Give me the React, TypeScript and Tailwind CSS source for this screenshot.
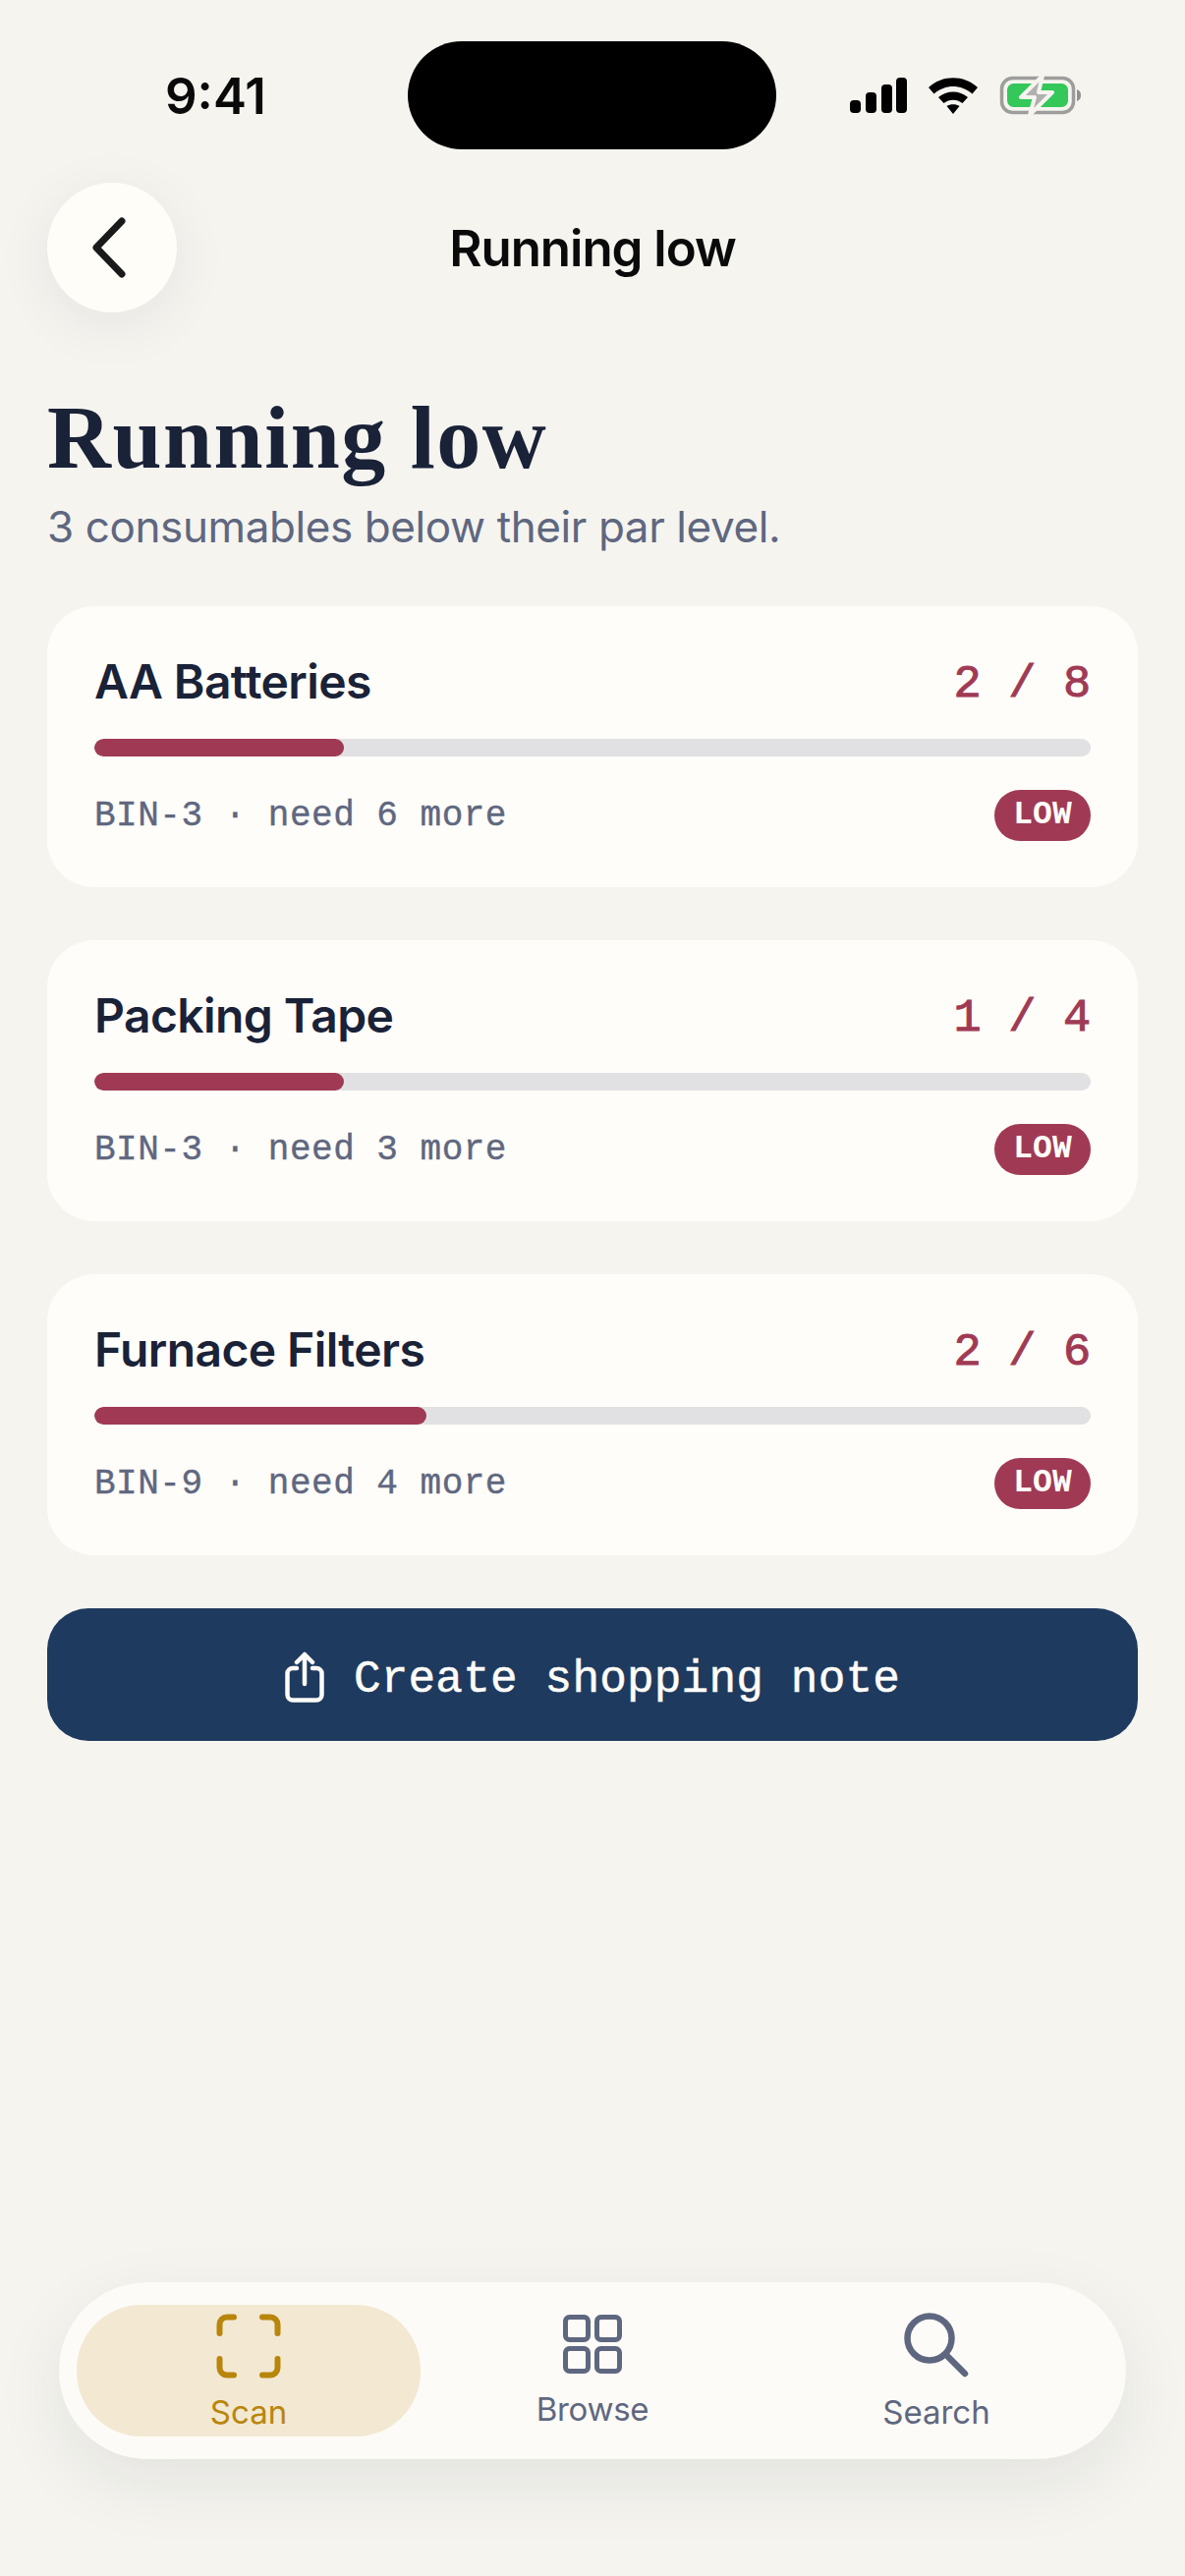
import React from "react";

const items = [
  { name: "AA Batteries", count: "2 / 8", meta: "BIN-3 · need 6 more", pct: 25 },
  { name: "Packing Tape", count: "1 / 4", meta: "BIN-3 · need 3 more", pct: 25 },
  { name: "Furnace Filters", count: "2 / 6", meta: "BIN-9 · need 4 more", pct: 33.33 },
];

const inter = "font-['Inter','Liberation_Sans',sans-serif]";
const mono = "font-['Liberation_Mono','DejaVu_Sans_Mono',monospace]";

function StatusIcons() {
  return (
    <svg width="240" height="42" viewBox="0 0 240 42" className="block">
      <rect x="5" y="26" width="11" height="13" rx="4" fill="#000" />
      <rect x="21" y="18" width="11" height="21" rx="4" fill="#000" />
      <rect x="37" y="10" width="11" height="29" rx="4" fill="#000" />
      <rect x="52" y="3" width="11" height="36" rx="4" fill="#000" />
      <path d="M85 13 C99 0 121 0 135 13 L129.500 19.500 C118 9.500 102 9.500 90.500 19.500 Z" fill="#000" />
      <path d="M95 23 C103 15.500 117 15.500 125 23 L119.500 29 C114 24.500 106 24.500 100.500 29 Z" fill="#000" />
      <path d="M103.500 32 C107 29.500 113 29.500 116.500 32 L110 40 Z" fill="#000" />
      <rect x="159.500" y="3.500" width="73" height="35" rx="11" fill="none" stroke="#9d9d9b" strokeWidth="3.500" />
      <rect x="165" y="9" width="62" height="24" rx="6.500" fill="#34c759" />
      <path d="M236 15 C239 16 240 18 240 21 C240 24 239 26 236 27 Z" fill="#8f8f8d" />
      <path d="M201 1 L179 23 H193 L188 41 L211 18 H197 Z" fill="#b0b0ae" stroke="#f5f4ef" strokeWidth="4" strokeLinejoin="round" />
    </svg>
  );
}

function ScanIcon() {
  return (
    <svg width="66" height="66" viewBox="0 0 66 66" fill="none" stroke="#b8860b" strokeWidth="6" strokeLinecap="round" className="block">
      <path d="M3.500 20 V11 A7.500 7.500 0 0 1 11 3.500 H18" />
      <path d="M47 3.500 H55 A7.500 7.500 0 0 1 62.500 11 V20" />
      <path d="M3.500 46 V55 A7.500 7.500 0 0 0 11 62.500 H18" />
      <path d="M47 62.500 H55 A7.500 7.500 0 0 0 62.500 55 V46" />
    </svg>
  );
}

function GridIcon() {
  return (
    <svg width="60" height="60" viewBox="0 0 60 60" fill="none" stroke="#5f6780" strokeWidth="5" className="block">
      <rect x="2.500" y="2.500" width="23" height="23" rx="4" />
      <rect x="34.500" y="2.500" width="23" height="23" rx="4" />
      <rect x="2.500" y="34.500" width="23" height="23" rx="4" />
      <rect x="34.500" y="34.500" width="23" height="23" rx="4" />
    </svg>
  );
}

function SearchIcon() {
  return (
    <svg width="66" height="66" viewBox="0 0 66 66" fill="none" stroke="#5f6780" strokeWidth="6.500" strokeLinecap="round" className="block">
      <circle cx="26" cy="26" r="22.500" />
      <path d="M43 43 L62 62" />
    </svg>
  );
}

export default function App() {
  return (
    <div className={`w-[1206px] h-[2622px] bg-[#f5f4ef] flex flex-col overflow-hidden ${inter}`}>
      <div className="relative h-[186px] shrink-0">
        <div className="absolute left-[415px] top-[42px] w-[375px] h-[110px] bg-black rounded-[55px]" />
        <span className="absolute left-[168px] top-[68px] text-[51px] leading-[60px] font-semibold text-[#0a0a0a]">9:41</span>
        <div className="absolute left-[860px] top-[76px]"><StatusIcons /></div>
      </div>

      <div className="relative h-[132px] mx-[48px] shrink-0 flex items-center justify-center">
        <div className="absolute left-0 top-0 w-[132px] h-[132px] rounded-full bg-[#fffdf8] shadow-[0_12px_60px_rgba(26,34,56,0.07)] flex items-center justify-center">
          <svg width="40" height="62" viewBox="0 0 40 62" fill="none" stroke="#1a1a1a" strokeWidth="7" strokeLinecap="round" strokeLinejoin="round" className="block -translate-x-[3px]">
            <path d="M33 4 L7 31 L33 58" />
          </svg>
        </div>
        <span className="text-[51px] leading-[60px] pt-[2px] font-semibold tracking-[-1px] text-[#0a0a0a]">Running low</span>
      </div>

      <div className="px-[48px] flex flex-col">
        <h1 className="mt-[78px] text-[90px] leading-[100px] font-bold tracking-[1.5px] text-[#1a2238] font-['Liberation_Serif','DejaVu_Serif',serif]">Running low</h1>
        <p className="mt-[9px] text-[44px] leading-[62px] tracking-[-0.4px] text-[#5f6780]">3 consumables below their par level.</p>

        <div className="mt-[50px] flex flex-col gap-[54px]">
          {items.map((it) => (
            <div key={it.name} className="bg-[#fffdf9] rounded-[48px] h-[286px] px-[48px] pt-[48px]">
              <div className="flex justify-between items-center h-[58px]">
                <span className="text-[48px] leading-[58px] font-semibold tracking-[-0.6px] text-[#1a2238]">{it.name}</span>
                <span className={`${mono} text-[47px] leading-[58px] pt-[5px] tracking-[-0.3px] [-webkit-text-stroke:1px_#a03a54] text-[#a03a54]`}>{it.count}</span>
              </div>
              <div className="mt-[29px] h-[18px] rounded-[9px] bg-[#e1e1e3] overflow-hidden">
                <div className="h-full rounded-[9px] bg-[#a03a54]" style={{ width: `${it.pct}%` }} />
              </div>
              <div className="mt-[32px] flex justify-between items-center">
                <span className={`${mono} text-[36px] tracking-[0.5px] pt-[2px] [-webkit-text-stroke:0.4px_#5f6780] text-[#5f6780]`}>{it.meta}</span>
                <span className={`${mono} w-[98px] h-[52px] rounded-[26px] bg-[#a03a54] text-[#fffdf9] text-[33px] font-bold flex items-center justify-center`}>LOW</span>
              </div>
            </div>
          ))}
        </div>

        <div className="mt-[54px] h-[135px] rounded-[42px] bg-[#1f3a5f] flex items-center justify-center gap-[30px]">
          <svg width="40" height="52" viewBox="0 0 40 52" fill="none" stroke="#fffdf9" strokeWidth="4.500" strokeLinecap="round" strokeLinejoin="round" className="block translate-y-[2px]">
            <path d="M12 17 H8 A5.500 5.500 0 0 0 2.500 22.500 V44 A5.500 5.500 0 0 0 8 49.500 H32 A5.500 5.500 0 0 0 37.500 44 V22.500 A5.500 5.500 0 0 0 32 17 H28" />
            <path d="M20 33 V3 M12 11 L20 3 L28 11" />
          </svg>
          <span className={`${mono} text-[46px] leading-[58px] pt-[11px] tracking-[0.2px] [-webkit-text-stroke:0.5px_#fffdf9] text-[#fffdf9]`}>Create shopping note</span>
        </div>
      </div>

      <div className="mt-auto mb-[119px] mx-[60px] h-[180px] rounded-[90px] bg-[#fcfbf7] shadow-[0_24px_72px_rgba(26,34,56,0.08)] px-[18px] py-[23px] flex items-stretch">
        <div className="flex-1 rounded-[66px] bg-[#f3e8d2] flex flex-col items-center pt-[9px] text-[#b8860b]">
          <ScanIcon />
          <span className="mt-[12px] text-[33px] leading-[44px]">Scan</span>
        </div>
        <div className="flex-1 flex flex-col items-center pt-[10px] text-[#5f6780]">
          <GridIcon />
          <span className="mt-[14px] text-[33px] leading-[44px] tracking-[-0.3px]">Browse</span>
        </div>
        <div className="flex-1 flex flex-col items-center pt-[8px] text-[#5f6780]">
          <SearchIcon />
          <span className="mt-[13px] text-[33px] leading-[44px]">Search</span>
        </div>
      </div>
    </div>
  );
}
